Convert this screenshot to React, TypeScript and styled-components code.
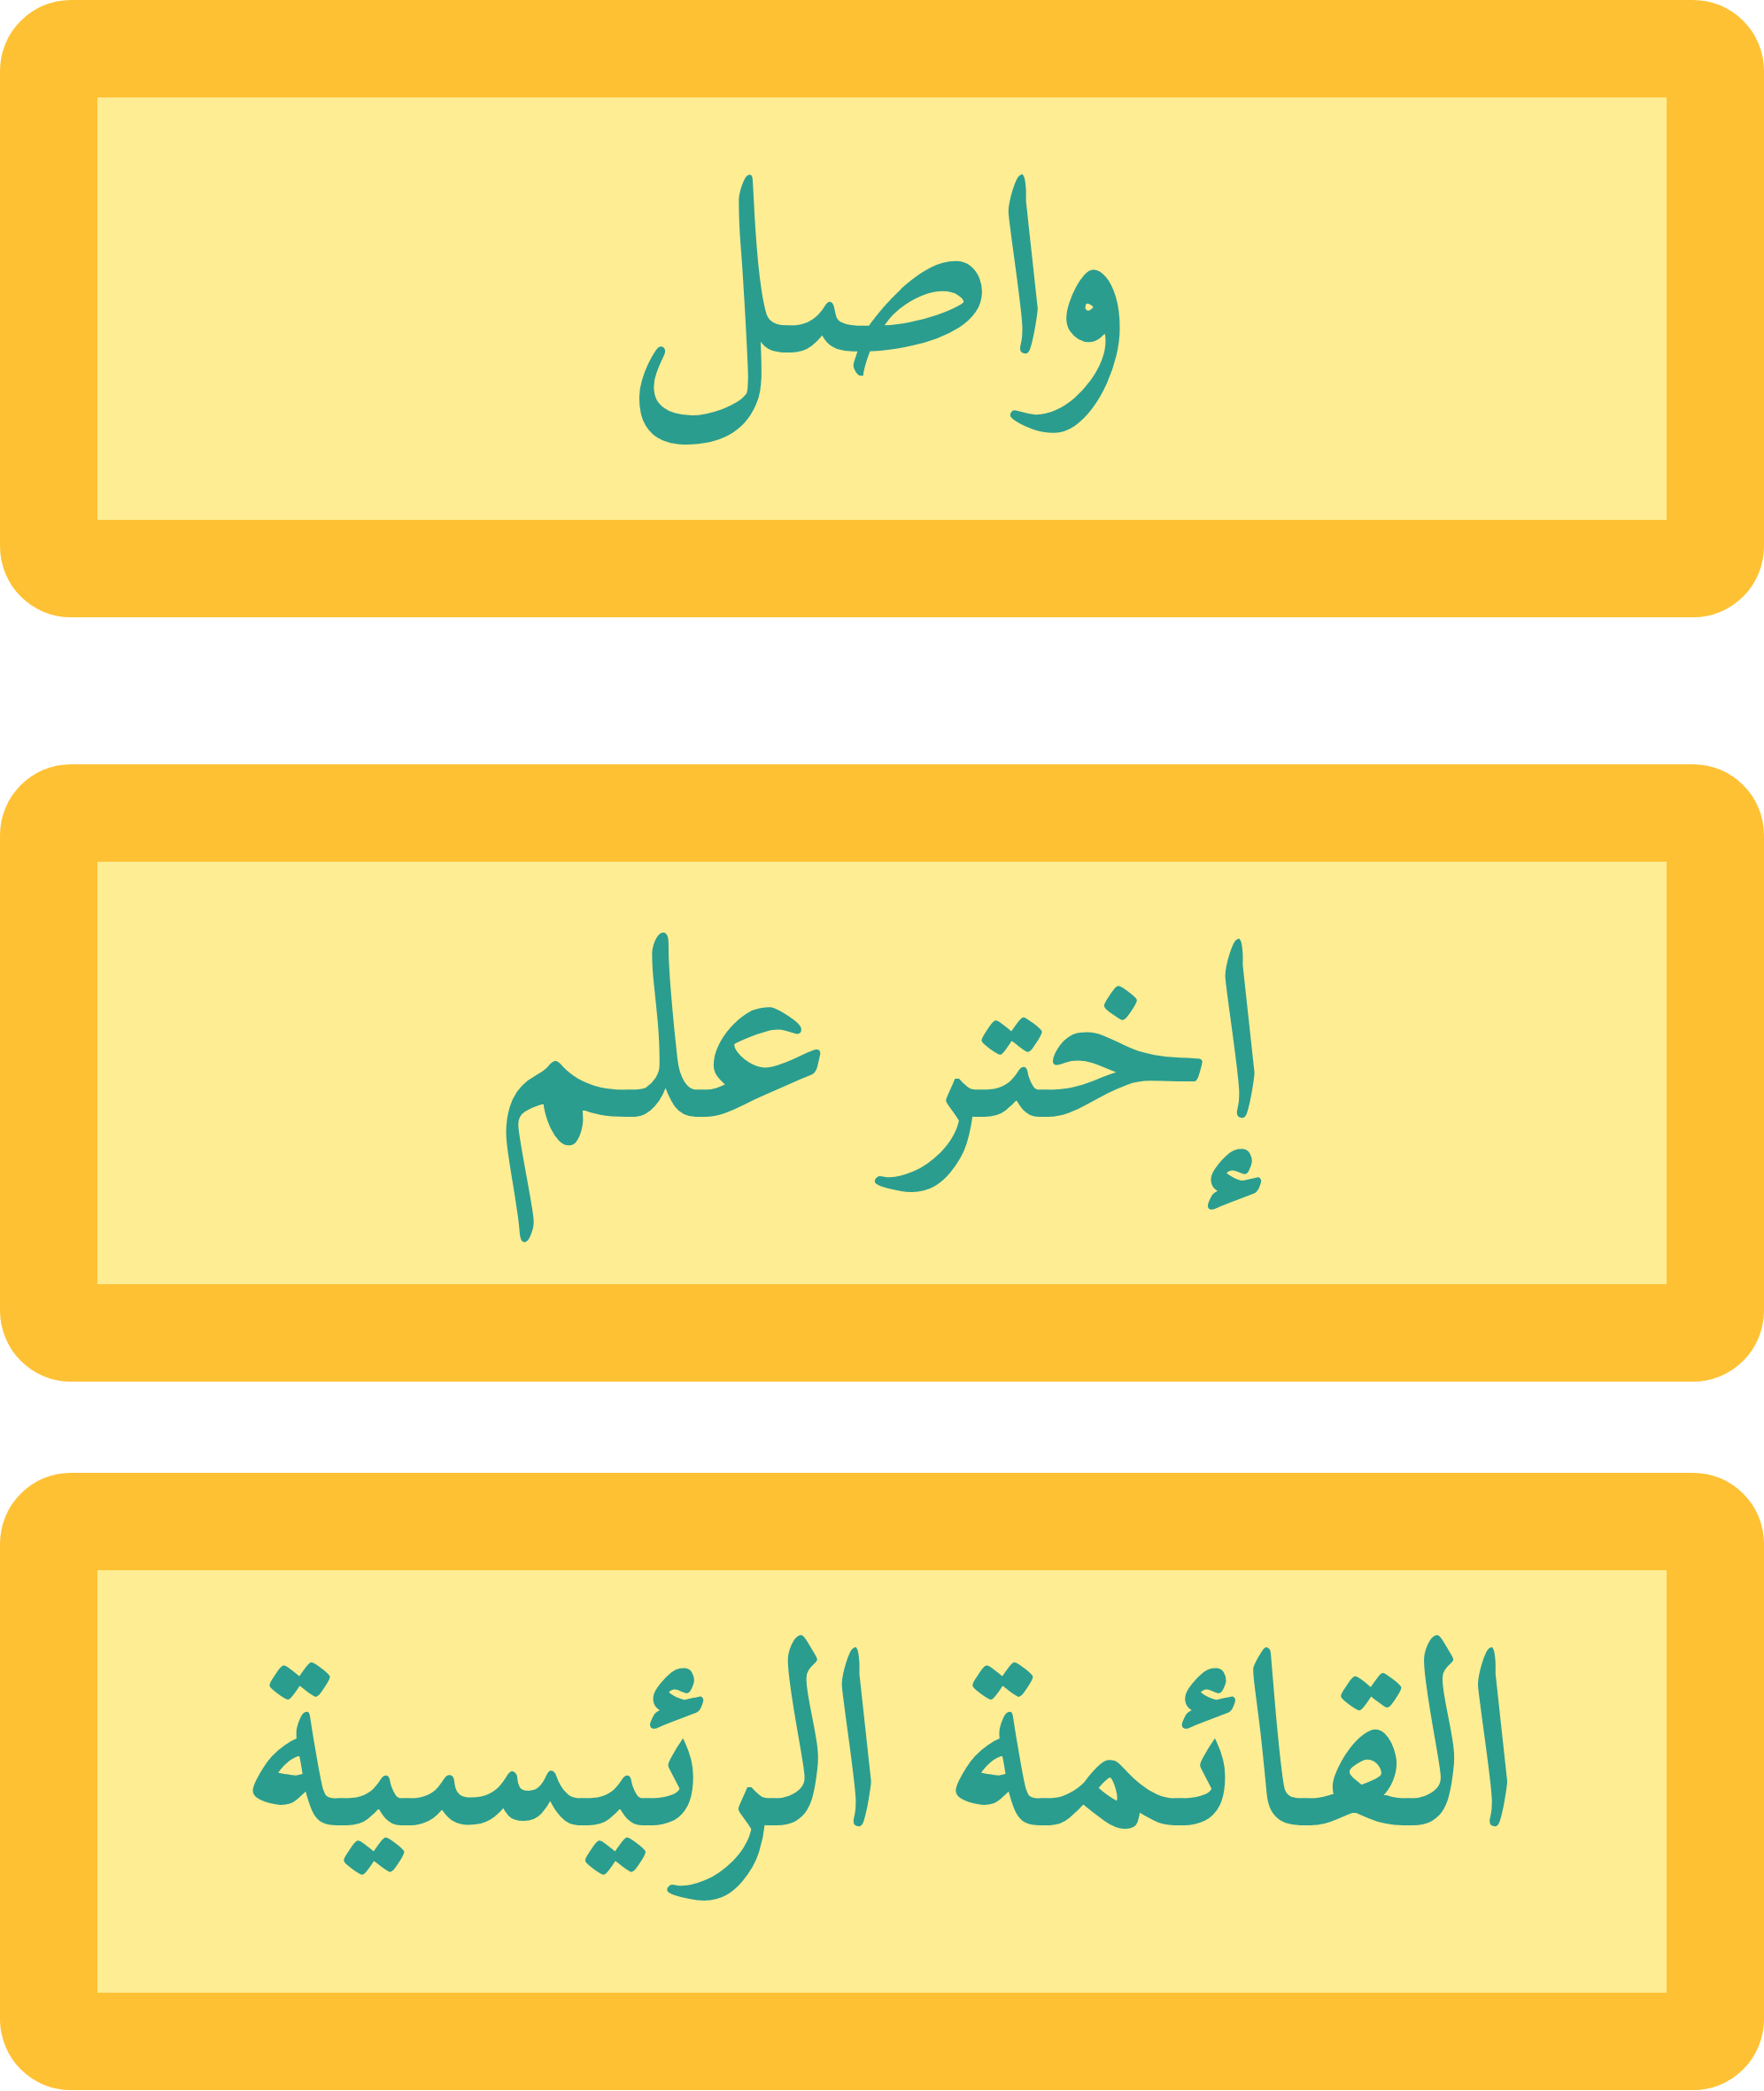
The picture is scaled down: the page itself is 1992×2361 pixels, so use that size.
import React from "react";
import styled, { createGlobalStyle } from "styled-components";

const GlobalStyle = createGlobalStyle`
  html, body {
    margin: 0;
    padding: 0;
    background: #ffffff;
  }
`;

const Menu = styled.div`
  width: 1992px;
  display: flex;
  flex-direction: column;
`;

const MenuButton = styled.div<{ $gap: number }>`
  box-sizing: border-box;
  height: 697px;
  margin-bottom: ${(p) => p.$gap}px;
  background: #fec134;
  border-radius: 80px;
  padding: 110px;
  display: flex;
`;

const Label = styled.div`
  flex: 1;
  box-sizing: border-box;
  padding-bottom: 86px;
  background: #feed93;
  display: flex;
  align-items: center;
  justify-content: center;
  color: #2a9d8f;
  font-family: "Scheherazade New", "Liberation Mono";
  font-size: 278px;
  line-height: 1;
  direction: rtl;
  -webkit-text-stroke: 6px #2a9d8f;
`;

const items = [
  { text: "واصل", gap: 166 },
  { text: "إختر علم", gap: 103 },
  { text: "القائمة الرئيسية", gap: 0 },
];

export default function App() {
  return (
    <>
      <GlobalStyle />
      <Menu>
        {items.map((item) => (
          <MenuButton key={item.text} $gap={item.gap}>
            <Label>{item.text}</Label>
          </MenuButton>
        ))}
      </Menu>
    </>
  );
}
